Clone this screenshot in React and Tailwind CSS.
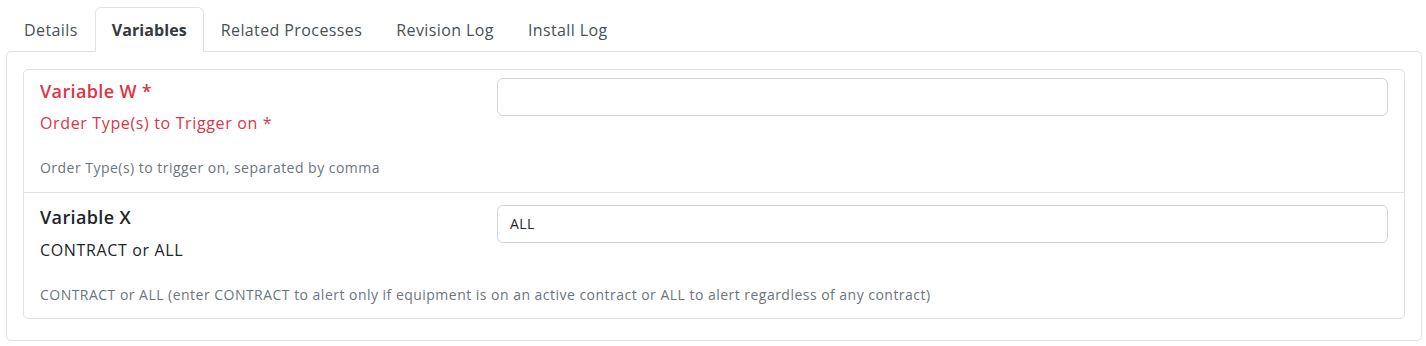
import React from "react";

const tabs = ["Details", "Variables", "Related Processes", "Revision Log", "Install Log"];

function Row({ first, label, sub, desc, value, required }) {
  return (
    <div
      className={
        "border border-[#dee2e6] bg-white px-4 " +
        (first ? "rounded-t-[5px] pt-2 pb-[14px]" : "-mt-px rounded-b-[5px] pt-3 pb-[13px]")
      }
    >
      <div className="flex gap-6">
        <div className="w-[433px] shrink-0">
          <div
            className={
              "text-[18px] leading-[1.2] font-semibold tracking-[0.02em] " +
              (required ? "text-[#dc3545]" : "text-[#212529]") +
              (first ? " mt-[3px]" : " mt-[2px]")
            }
          >
            {label}
          </div>
          <div
            className={
              "text-[16px] leading-6 tracking-[0.04em] " +
              (first ? "mt-[8px] " : "mt-[10px] ") +
              (required ? "text-[#dc3545]" : "text-[#212529]")
            }
          >
            {sub}
          </div>
        </div>
        <div className="flex-1">
          <div className="h-[38px] rounded-[6px] border border-[#ced4da] bg-white px-3 flex items-center text-[14px] tracking-[0.03em] text-[#212529]">
            {value}
          </div>
        </div>
      </div>
      <div className="text-[14px] leading-[21px] tracking-[0.034em] text-[#6c757d] mt-[22px]">{desc}</div>
    </div>
  );
}

export default function App() {
  return (
    <div
      className="bg-white w-[1426px] h-[346px] pt-[7px]"
      style={{ fontFamily: '"Open Sans", "Noto Sans", Arial, sans-serif' }}
    >
      <div className="flex ml-[7px] relative z-10">
        {tabs.map((t) => {
          const active = t === "Variables";
          return (
            <div
              key={t}
              className={
                "h-[45px] px-4 pt-[10px] text-[16px] leading-6 border rounded-t-[6px] " +
                (active
                  ? "border-[#dee2e6] border-b-white bg-white font-bold text-[#343a40] tracking-[0.005em]"
                  : "border-transparent text-[#495057] tracking-[0.025em]")
              }
            >
              {t}
            </div>
          );
        })}
      </div>
      <div className="ml-[6px] mr-[4px] -mt-px h-[290px] rounded-[5px] border border-[#dee2e6] px-4 pt-[17px]">
        <Row
          first
          required
          label="Variable W *"
          sub="Order Type(s) to Trigger on *"
          desc="Order Type(s) to trigger on, separated by comma"
          value=""
        />
        <Row
          label="Variable X"
          sub="CONTRACT or ALL"
          desc="CONTRACT or ALL (enter CONTRACT to alert only if equipment is on an active contract or ALL to alert regardless of any contract)"
          value="ALL"
        />
      </div>
    </div>
  );
}
